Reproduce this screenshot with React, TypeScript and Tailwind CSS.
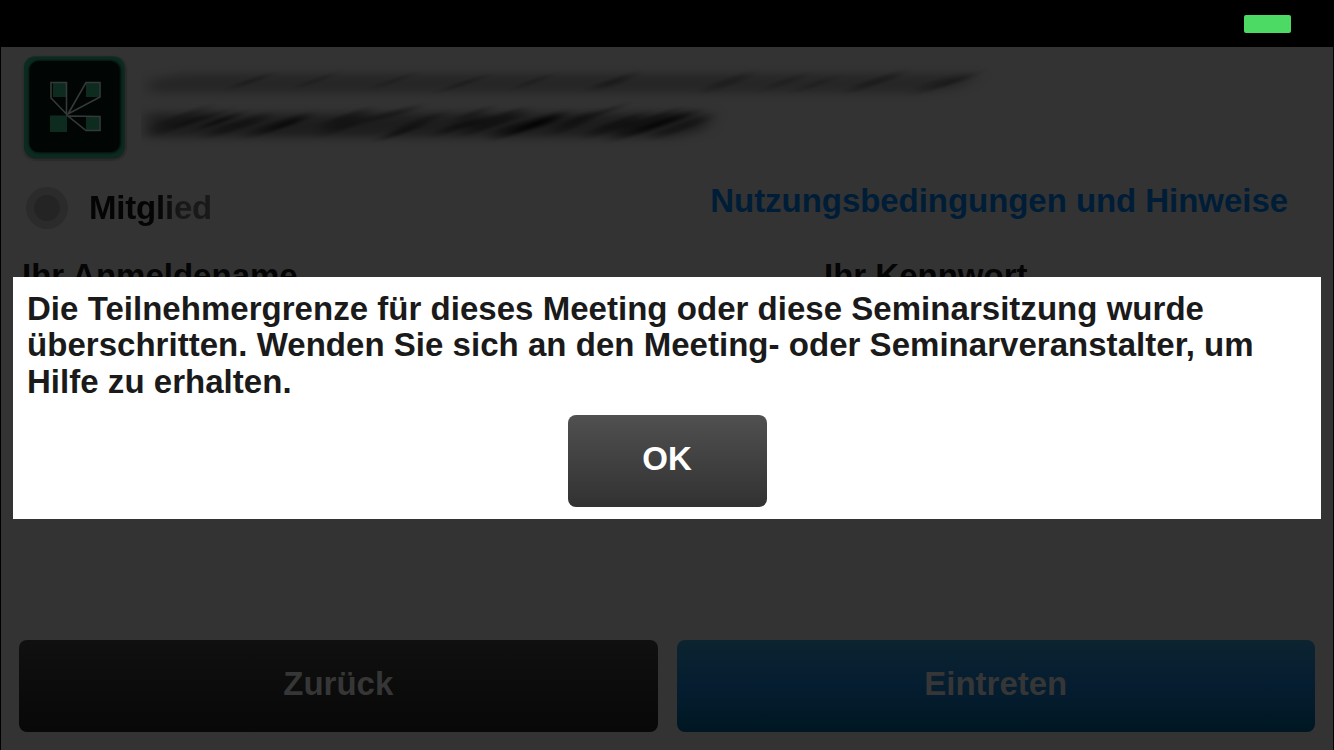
import clsx from 'clsx';

interface Streak {
  x1: number;
  y1: number;
  x2: number;
  y2: number;
  width: number;
  opacity: number;
}

// [x1, y1, x2, y2, width, opacity]
const toStreak = ([x1, y1, x2, y2, width, opacity]: number[]): Streak => ({ x1, y1, x2, y2, width, opacity });

const titleStreaks = [
  [95, 33, 125, 23, 3, 0.35],
  [160, 33, 190, 22, 3, 0.25],
  [235, 34, 270, 22, 3, 0.22],
  [305, 36, 340, 25, 3, 0.3],
  [380, 33, 405, 24, 3, 0.3],
  [455, 33, 490, 22, 3, 0.25],
  [460, 34, 485, 26, 5, 0.25],
  [570, 35, 605, 23, 7, 0.22],
  [630, 34, 660, 23, 5, 0.2],
  [660, 36, 690, 26, 4, 0.2],
  [715, 35, 755, 22, 6, 0.28],
  [780, 36, 815, 25, 8, 0.18],
  [795, 34, 832, 22, 4, 0.25],
].map(toStreak);

const nameStreaks = [
  [20, 75, 60, 60, 12, 0.28],
  [40, 72, 80, 60, 5, 0.3],
  [65, 73, 92, 63, 4, 0.65],
  [75, 79, 120, 65, 8, 0.35],
  [115, 79, 160, 65, 8, 0.35],
  [132, 76, 158, 66, 4, 0.6],
  [190, 74, 220, 63, 14, 0.35],
  [230, 66, 272, 56, 5, 0.35],
  [245, 84, 278, 73, 4, 0.5],
  [260, 75, 295, 63, 5, 0.3],
  [303, 78, 340, 66, 6, 0.45],
  [320, 66, 342, 57, 5, 0.35],
  [330, 76, 375, 61, 10, 0.4],
  [360, 80, 415, 65, 10, 0.45],
  [377, 77, 412, 65, 5, 0.8],
  [420, 75, 445, 64, 10, 0.38],
  [440, 66, 478, 54, 4, 0.3],
  [455, 79, 495, 65, 8, 0.4],
  [480, 80, 530, 63, 12, 0.42],
  [500, 77, 545, 62, 6, 0.6],
  [520, 81, 560, 67, 7, 0.3],
].map(toStreak);

function Smudge() {
  return (
    <svg width="870" height="100" viewBox="0 0 870 100" aria-hidden="true">
      <defs>
        <filter id="soft" x="-5%" y="-40%" width="110%" height="180%">
          <feGaussianBlur stdDeviation="8 4" />
        </filter>
        <filter id="streak" x="-5%" y="-30%" width="110%" height="160%">
          <feGaussianBlur stdDeviation="10 1.5" />
        </filter>
      </defs>
      <g filter="url(#soft)" fill="#000">
        <path d="M8 27 L40 21 H838 L820 34 L780 40 H8Z" opacity="0.25" />
        <path d="M6 60 L70 61 H200 L265 60 H572 L562 77 L530 84 H6Z" opacity="0.42" />
      </g>
      {/* Unschärfe entlang der Strichrichtung */}
      <g transform="rotate(-18)">
        <g filter="url(#streak)">
          <g transform="rotate(18)" stroke="#000" strokeLinecap="round">
            {[...titleStreaks, ...nameStreaks].map((s, i) => (
              <line key={i} x1={s.x1} y1={s.y1} x2={s.x2} y2={s.y2} strokeWidth={s.width} opacity={s.opacity} />
            ))}
          </g>
        </g>
      </g>
    </svg>
  );
}

function ConnectLogo() {
  return (
    <svg width="108" height="110" viewBox="20 53 108 110" aria-hidden="true">
      <defs>
        <filter id="logoShadow" x="-10%" y="-10%" width="120%" height="120%">
          <feGaussianBlur stdDeviation="1.5" />
        </filter>
      </defs>
      <rect x="24.5" y="58" width="100.5" height="101" rx="11" fill="#161c1a" filter="url(#logoShadow)" />
      <rect x="24" y="56.5" width="100.5" height="101" rx="11" fill="#0b2b20" />
      <rect x="29.5" y="61" width="91" height="91.5" rx="9" fill="#010504" filter="url(#logoShadow)" />
      <rect x="29.5" y="61" width="89" height="91" rx="9" fill="#010504" />
      <g fill="#0e2b20">
        <rect x="53" y="83" width="13.5" height="14" />
        <rect x="86" y="83" width="13.5" height="14" />
        <rect x="50" y="115.5" width="17" height="16.5" />
        <rect x="86" y="117" width="13.5" height="13.5" />
      </g>
      <g fill="none" stroke="#343a38" strokeWidth="1.6">
        <path d="M51 82.5 H66.5 V114 L51 98Z" />
        <path d="M68 114 L86 82.5 H100 V97Z" />
        <path d="M68 116 L100 116.5 V130.5 H86Z" />
      </g>
    </svg>
  );
}

interface FormButtonProps {
  label: string;
  className?: string;
}

function FormButton({ label, className }: FormButtonProps) {
  return (
    <button
      type="button"
      className={clsx('flex h-[92px] items-start justify-center rounded-lg pt-[26px] leading-9 font-bold', className)}
    >
      {label}
    </button>
  );
}

export default function App() {
  return (
    <div className="relative flex h-[750px] w-[1334px] flex-col overflow-hidden bg-black font-['Liberation_Sans',Arial,sans-serif] text-[33px] leading-9 font-bold">
      {/* Statusleiste */}
      <div className="flex h-[47px] shrink-0 justify-end pt-[15px] pr-[43.5px]">
        <div className="h-[18px] w-[47px] rounded-[2px] bg-[#4cd964]" />
      </div>

      {/* Anmeldeformular */}
      <div className="mx-px flex flex-1 flex-col bg-[#333333]">
        <div className="flex h-[116px] pt-[6px] pl-[19px]">
          <ConnectLogo />
          <div className="pl-[13px]">
            <Smudge />
          </div>
        </div>

        <div className="flex h-[95px] justify-between pr-[45px] pl-[25px]">
          <div className="flex gap-[21px] pt-[24px]">
            <span className="flex size-[42px] items-center justify-center rounded-full bg-[#2b2b2b]">
              <span className="size-[26px] rounded-full bg-[#242424]" />
            </span>
            <span className="bg-linear-to-r from-[#040404] from-55% to-[#191919] to-75% bg-clip-text pt-[3px] tracking-[-0.2px] text-transparent">
              Mitglied
            </span>
          </div>
          <a className="pt-[20px] tracking-[-0.05px] text-[#001d38]">Nutzungsbedingungen und Hinweise</a>
        </div>

        <div className="flex text-[#050505]">
          <span className="w-[802px] pl-[21px]">Ihr Anmeldename</span>
          <span className="pl-[21px]">Ihr Kennwort</span>
        </div>

        <div className="mt-auto grid grid-cols-2 gap-[19px] px-[18px] pb-[18px] text-[#363636]">
          <FormButton label="Zurück" className="bg-linear-to-b from-[#101010] to-[#080808]" />
          <FormButton
            label="Eintreten"
            className="bg-linear-to-b from-[#0c2430] via-[#051d30] via-50% to-[#001722]"
          />
        </div>
      </div>

      {/* Hinweisdialog */}
      <div
        role="dialog"
        className="absolute top-[277px] left-[13px] flex h-[242px] w-[1308px] flex-col items-center justify-between bg-white pt-[14px] pb-3"
      >
        <p className="w-full pl-[14px] leading-[36.3px] tracking-[0.03px] text-[#1a1a1a]">
          Die Teilnehmergrenze für dieses Meeting oder diese Seminarsitzung wurde
          <br />
          überschritten. Wenden Sie sich an den Meeting- oder Seminarveranstalter, um
          <br />
          Hilfe zu erhalten.
        </p>
        <FormButton label="OK" className="w-[199px] bg-linear-to-b from-[#505050] to-[#323232] text-white" />
      </div>
    </div>
  );
}
